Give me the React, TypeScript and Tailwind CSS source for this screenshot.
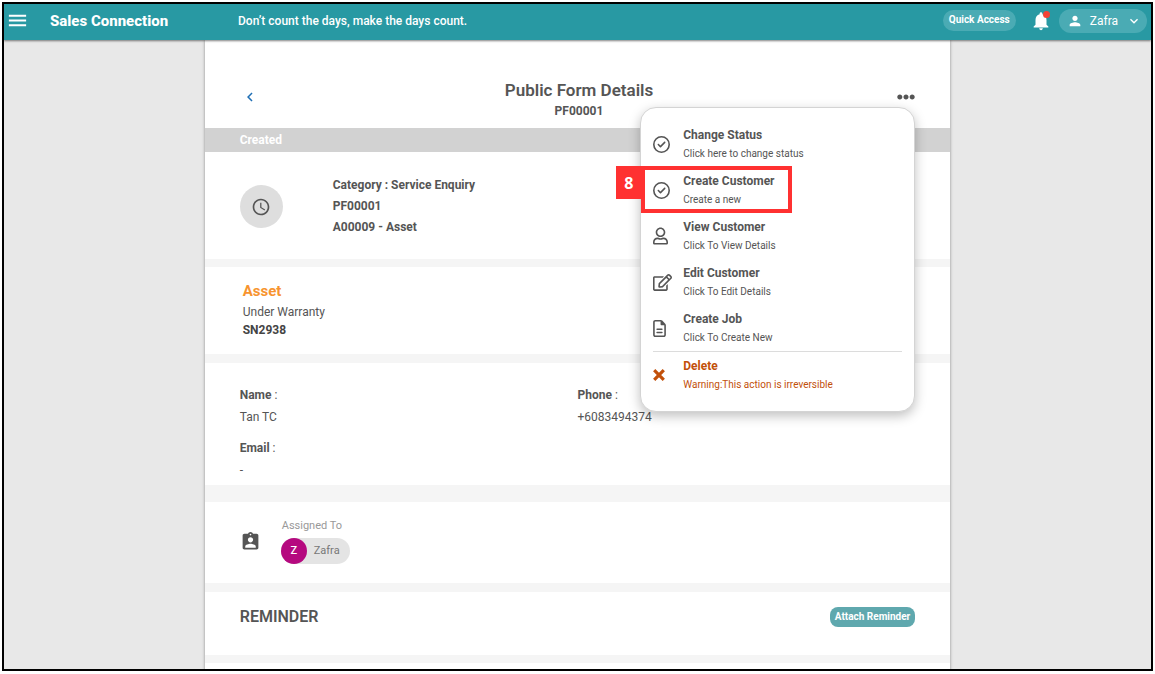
import type { ReactNode } from "react";
import {
  MdAccessTime,
  MdAssignmentInd,
  MdKeyboardArrowDown,
  MdKeyboardArrowLeft,
  MdMenu,
  MdNotifications,
  MdPerson,
} from "react-icons/md";
import { FaEllipsisH, FaRegEdit, FaRegUser } from "react-icons/fa";
import { FaRegCircleCheck, FaRegFileLines } from "react-icons/fa6";

type MenuEntry = {
  title: string;
  hint: string;
  icon: ReactNode;
  step?: number;
  danger?: boolean;
};

function CrossIcon() {
  return (
    <svg width="12" height="12" viewBox="0 0 12 12" fill="none" stroke="currentColor" strokeWidth="3.2" aria-hidden="true">
      <path d="M1.2 1.2 10.8 10.8M10.8 1.2 1.2 10.8" />
    </svg>
  );
}

const entries: MenuEntry[] = [
  { title: "Change Status", hint: "Click here to change status", icon: <FaRegCircleCheck size={17} /> },
  { title: "Create Customer", hint: "Create a new", icon: <FaRegCircleCheck size={17} />, step: 8 },
  { title: "View Customer", hint: "Click To View Details", icon: <FaRegUser className="h-[18px] w-[15px]" /> },
  { title: "Edit Customer", hint: "Click To Edit Details", icon: <FaRegEdit size={19} /> },
  { title: "Create Job", hint: "Click To Create New", icon: <FaRegFileLines className="h-[17px] w-[13px]" /> },
  { title: "Delete", hint: "Warning:This action is irreversible", icon: <CrossIcon />, danger: true },
];

function Header() {
  return (
    <header className="relative z-20 flex h-9 shrink-0 items-center bg-[#2899a3] pr-1 pb-[3px] pl-[2px] text-white shadow-[0_1px_2px_rgba(0,0,0,0.5)]">
      <button aria-label="Open menu" className="flex">
        <MdMenu size={23} />
      </button>
      <h1 className="ml-[21px] w-[188px] text-[15px] leading-5 font-extrabold">Sales Connection</h1>
      <p className="text-[12px] leading-4 font-medium">Don’t count the days, make the days count.</p>
      <button className="mr-[14px] ml-auto h-[21px] rounded-full bg-[#4aabb4] px-[6px] pb-[2px] text-[10px] leading-4 font-bold">
        Quick Access
      </button>
      <button aria-label="Notifications" className="relative mr-[7px] flex">
        <MdNotifications size={22} />
        <span className="absolute top-[1px] right-[2px] size-[7px] rounded-full bg-[#f44336]" />
      </button>
      <button className="flex h-6 items-center rounded-full bg-[#4aabb4] pr-[5px] pl-2 text-[12px] leading-4">
        <MdPerson size={16} />
        <span className="mr-2 ml-[7px]">Zafra</span>
        <MdKeyboardArrowDown size={16} />
      </button>
    </header>
  );
}

function ActionMenu() {
  return (
    <div
      role="menu"
      className="absolute top-[67px] right-[35px] z-10 w-[275px] rounded-2xl border border-[#d4d4d4] bg-white pt-[13px] pb-[14px] shadow-[0_4px_12px_rgba(0,0,0,0.25)]"
    >
      {entries.map((entry) => (
        <div key={entry.title} className="relative px-3">
          <button
            role="menuitem"
            className={
              entry.danger
                ? "flex h-[46px] w-full items-center border-t border-[#dcdcdc] text-left text-[#c2500a]"
                : "flex h-[46px] w-full items-center text-left text-[#555]"
            }
          >
            <span className="w-[30px]">{entry.icon}</span>
            <span className="flex flex-col gap-[3px] pt-[1px]">
              <span className="text-[12px] leading-4 font-bold">{entry.title}</span>
              <span className="text-[10px] leading-4">{entry.hint}</span>
            </span>
          </button>
          {entry.step && (
            <div className="pointer-events-none absolute -top-[1px] -left-[25px] flex items-start">
              <span className="flex h-[33px] w-[25px] items-center justify-center bg-[#ff3131] font-['Open_Sans',sans-serif] text-[16px] leading-5 font-bold text-white">
                {entry.step}
              </span>
              <span className="h-[47px] w-[151px] border-4 border-[#ff3131]" />
            </div>
          )}
        </div>
      ))}
    </div>
  );
}

function Field({ label, value }: { label: string; value: string }) {
  return (
    <div>
      <dt>
        <b className="font-bold">{label}</b> :
      </dt>
      <dd>{value}</dd>
    </div>
  );
}

export default function App() {
  return (
    <div className="h-screen bg-white px-[2px] pt-[2px] pb-[3px] font-['Roboto',sans-serif] text-[#555]">
      <div className="flex h-full flex-col overflow-hidden border-2 border-black bg-[#e8e8e8]">
        <Header />
        <main className="relative mx-auto w-[65%] grow bg-[#f5f5f5] shadow-[0_0_3px_rgba(0,0,0,0.4)]">
          <div className="flex items-start justify-between bg-white pt-[38px] pr-[35px] pb-[7px] pl-[36px]">
            <button aria-label="Back" className="flex h-[38px] w-5 items-center text-[#1f6fb5]">
              <MdKeyboardArrowLeft size={18} />
            </button>
            <div className="text-center">
              <h2 className="text-[17px] leading-6 font-semibold">Public Form Details</h2>
              <p className="text-[12px] leading-[19px] font-bold">PF00001</p>
            </div>
            <button aria-label="More actions" className="flex h-[38px] items-center">
              <FaEllipsisH size={18} />
            </button>
          </div>
          <ActionMenu />
          <p className="bg-[#d2d2d2] px-[35px] text-[12px] leading-6 font-bold text-white">Created</p>

          <section className="flex items-center gap-[50px] bg-white px-[35px] pt-[23px] pb-[21px]">
            <span className="flex size-[43px] items-center justify-center rounded-full bg-[#dedede]">
              <MdAccessTime size={20} />
            </span>
            <div className="text-[12px] leading-[21px] font-bold">
              <p>Category : Service Enquiry</p>
              <p>PF00001</p>
              <p>A00009 - Asset</p>
            </div>
          </section>

          <section className="mt-2 bg-white px-[38px] pt-3 pb-[15px] text-[12px] leading-[18px]">
            <h3 className="text-[15px] leading-6 font-bold text-[#f7942f]">Asset</h3>
            <p>Under Warranty</p>
            <p className="font-bold text-[#444]">SN2938</p>
          </section>

          <dl className="mt-[9px] grid grid-cols-2 gap-y-[9px] bg-white px-[35px] pt-[21px] pb-1 text-[12px] leading-[22px]">
            <Field label="Name" value="Tan TC" />
            <Field label="Phone" value="+6083494374" />
            <Field label="Email" value="-" />
          </dl>

          <section className="mt-[17px] flex items-center gap-5 bg-white px-[35px] pt-[13px] pb-[19px]">
            <MdAssignmentInd size={21} className="mt-1" />
            <div>
              <p className="pl-[1px] text-[11px] leading-[21px] text-[#999]">Assigned To</p>
              <div className="mt-[2px] flex h-[26px] items-center gap-[7px] rounded-full bg-[#e4e4e4] pr-[10px] text-[11px] leading-4 text-[#777]">
                <span className="flex size-[26px] items-center justify-center rounded-full bg-[#b5097f] font-medium text-white">
                  Z
                </span>
                Zafra
              </div>
            </div>
          </section>

          <section className="mt-[9px] flex items-start justify-between bg-white px-[35px] pt-[15px] pb-7">
            <h3 className="text-[16px] leading-5 font-semibold">REMINDER</h3>
            <button className="h-5 rounded-lg bg-[#5fa8ae] px-[5px] text-[10px] leading-4 font-bold text-white">
              Attach Reminder
            </button>
          </section>
          <section className="mt-2 h-10 bg-white" />
        </main>
      </div>
    </div>
  );
}
